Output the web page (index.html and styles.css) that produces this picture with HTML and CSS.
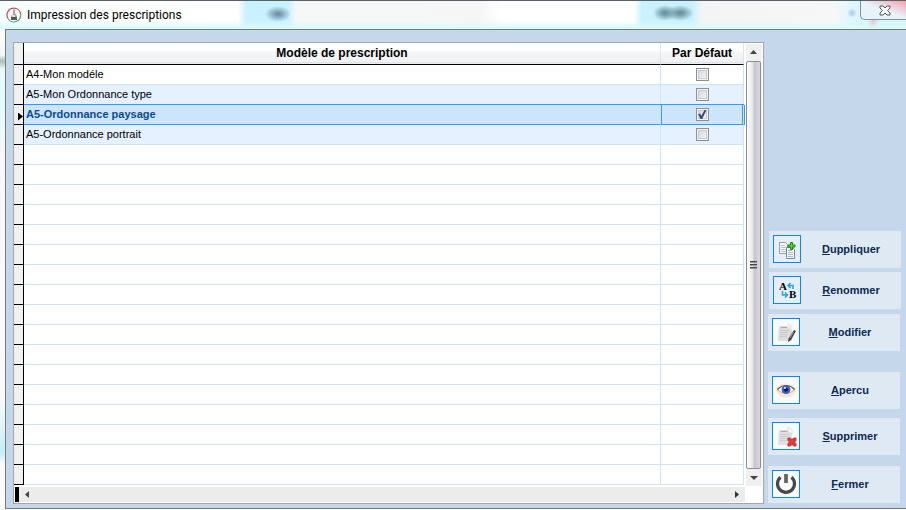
FILE: index.html
```html
<!DOCTYPE html>
<html lang="fr">
<head>
<meta charset="utf-8">
<title>Impression des prescriptions</title>
<link rel="stylesheet" href="styles.css">
</head>
<body>
<header class="titlebar">
  <svg class="app-icon" viewBox="0 0 16 16" aria-hidden="true">
    <circle cx="8" cy="8" r="6.5" fill="#fff"/>
    <path d="M8 1.2A6.8 6.8 0 0 0 2 11.5M8 1.2A6.8 6.8 0 0 1 14.6 7" fill="none" stroke="#d0464b" stroke-width="1.2"/>
    <path d="M14.6 7A6.8 6.8 0 0 1 2 11.5" fill="none" stroke="#43a363" stroke-width="1.2"/>
    <path d="M7 2.5h2V6l2 3v4H5V9l2-2z" fill="#aaa4a4"/>
    <path d="M5 10h6v3H5z" fill="#555"/>
    <path d="M6 8h3v2H6z" fill="#ddd"/>
  </svg>
  <h1 class="title">Impression des prescriptions</h1>
  <button class="close" type="button" aria-label="Fermer la fenêtre">
    <svg width="12" height="11" viewBox="0 0 12 11"><path d="M1 1h3l2 2 2-2h3v2L8.500 5.500 11 8v2H8L6 8l-2 2H1V8l2.500-2.500L1 3z" fill="#fff" stroke="#4c5162"/></svg>
  </button>
</header>
<main class="client">
  <section class="grid-frame">
    <div class="grid-main">
      <table class="grid">
        <colgroup><col class="col-mark"><col><col class="col-default"></colgroup>
        <thead><tr><th class="mark"></th><th>Modèle de prescription</th><th>Par Défaut</th></tr></thead>
        <tbody>
          <tr><td class="mark"></td><td>A4-Mon modéle</td><td class="check"><input type="checkbox" aria-label="A4-Mon modéle par défaut"></td></tr>
          <tr class="band"><td class="mark"></td><td>A5-Mon Ordonnance type</td><td class="check"><input type="checkbox" aria-label="A5-Mon Ordonnance type par défaut"></td></tr>
          <tr class="selected"><td class="mark"><span class="pointer"></span></td><td>A5-Ordonnance paysage</td><td class="check"><input type="checkbox" checked aria-label="A5-Ordonnance paysage par défaut"></td></tr>
          <tr class="band"><td class="mark"></td><td>A5-Ordonnance portrait</td><td class="check"><input type="checkbox" aria-label="A5-Ordonnance portrait par défaut"></td></tr>
          <tr><td class="mark"></td><td></td><td></td></tr>
          <tr><td class="mark"></td><td></td><td></td></tr>
          <tr><td class="mark"></td><td></td><td></td></tr>
          <tr><td class="mark"></td><td></td><td></td></tr>
          <tr><td class="mark"></td><td></td><td></td></tr>
          <tr><td class="mark"></td><td></td><td></td></tr>
          <tr><td class="mark"></td><td></td><td></td></tr>
          <tr><td class="mark"></td><td></td><td></td></tr>
          <tr><td class="mark"></td><td></td><td></td></tr>
          <tr><td class="mark"></td><td></td><td></td></tr>
          <tr><td class="mark"></td><td></td><td></td></tr>
          <tr><td class="mark"></td><td></td><td></td></tr>
          <tr><td class="mark"></td><td></td><td></td></tr>
          <tr><td class="mark"></td><td></td><td></td></tr>
          <tr><td class="mark"></td><td></td><td></td></tr>
          <tr><td class="mark"></td><td></td><td></td></tr>
          <tr><td class="mark"></td><td></td><td></td></tr>
        </tbody>
      </table>
      <div class="hscroll">
        <svg width="16" height="15" viewBox="0 0 16 15"><path d="M10 4v7L6 7.500z" fill="#444"/></svg>
        <svg width="16" height="15" viewBox="0 0 16 15"><path d="M6 4v7l4-3.500z" fill="#333"/></svg>
      </div>
    </div>
    <div class="vscroll">
      <svg width="16" height="17" viewBox="0 0 16 17"><path d="M4 10h7L7.500 6z" fill="#444"/></svg>
      <div class="thumb"><span class="grip"></span><span class="grip"></span><span class="grip"></span></div>
      <svg width="16" height="17" viewBox="0 0 16 17"><path d="M4 7h8l-4 4z" fill="#444"/></svg>
    </div>
  </section>
  <nav class="actions">
    <button class="action shifted" type="button">
      <span class="icon"><svg width="24" height="24" viewBox="0 0 24 24">
        <path d="M4.500 5.500h6l2 2v9h-8z" fill="#f4f8fb" stroke="#8e9fb2"/><path d="M6 8.500h4M6 10.500h5M6 12.500h5M6 14.500h5" stroke="#b4c2d2"/>
        <path d="M11.500 10.500h6l2 2v9h-8z" fill="#f4f8fb" stroke="#76899f"/><path d="M13 13.500h4M13 15.500h5M13 17.500h5M13 19.500h5" stroke="#aab9cc"/>
        <path d="M15.500 5.500h2v2.500h2.500v2h-2.500v2.500h-2V10H13V8h2.500z" fill="#5fd12b" stroke="#18860d"/></svg></span>
      <span class="label"><u>D</u>uppliquer</span>
    </button>
    <button class="action shifted" type="button">
      <span class="icon"><svg width="24" height="24" viewBox="0 0 24 24">
        <text class="glyph" x="4" y="12">A</text><text class="glyph" x="14" y="20">B</text>
        <path d="M13.500 7.500h4.500v3.500M15.500 5L13 7.500l2.500 2.500M7.500 13v4H12M10 14.500l2.500 2.500-2.500 2.500" fill="none" stroke="#25a5dc" stroke-width="1.500"/></svg></span>
      <span class="label"><u>R</u>enommer</span>
    </button>
    <button class="action edit" type="button">
      <span class="icon"><svg width="24" height="24" viewBox="0 0 24 24">
        <path d="M5 6h9l4 3v12H4z" fill="#dedede"/><path d="M14 3l4 3v4l-5-3z" fill="#eee"/><path d="M7 7.500h6" stroke="#aaa"/><path d="M6 10.500h9M6 12.500h8M6 14.500h7M6 16.500h7" stroke="#cacaca"/>
        <path d="M20 10l2 1-5 9-3 2 .5-3.500z" fill="#444"/><path d="M19.500 12L16 18" stroke="#999"/></svg></span>
      <span class="label"><u>M</u>odifier</span>
    </button>
    <button class="action preview" type="button">
      <span class="icon"><svg width="24" height="24" viewBox="0 0 24 24">
        <ellipse cx="12" cy="12.500" rx="9.500" ry="7" fill="#ffe6cd"/>
        <path d="M3.500 12Q12 3 20.500 12 12 19 3.500 12z" fill="#fff" stroke="#dca77c"/>
        <path d="M3 11.500Q12 3.500 21 11.500" fill="none" stroke="#7b6058" stroke-width="1.100"/>
        <circle cx="12" cy="11.700" r="4.400" fill="#2f62d2"/><circle cx="12" cy="11.700" r="2" fill="#071340"/><circle cx="11" cy="10" r="1" fill="#fff"/></svg></span>
      <span class="label"><u>A</u>percu</span>
    </button>
    <button class="action remove" type="button">
      <span class="icon"><svg width="24" height="24" viewBox="0 0 24 24">
        <path d="M5 6h9l4 3v12H4z" fill="#e0e0e0"/><path d="M14 3l4 3v4l-4-3z" fill="#fff" stroke="#ddd"/><path d="M7 7.500h6" stroke="#aaa"/><path d="M6 10.500h9M6 12.500h8M6 14.500h8M6 16.500h7" stroke="#cbcbcb"/>
        <path d="M14 14h2l2 1.500 2-1.500h2v2.500L20.500 18l1.500 1.500V22h-2l-2-1.500L16 22h-2v-2.500l1.500-1.500-1.500-1.500z" fill="#e23c38" stroke="#bf3030"/></svg></span>
      <span class="label"><u>S</u>upprimer</span>
    </button>
    <button class="action quit" type="button">
      <span class="icon"><svg width="24" height="24" viewBox="0 0 24 24">
        <path d="M6.500 5.300a8.500 8.500 0 1 0 11 0" fill="none" stroke="#484848" stroke-width="3.200"/><path d="M12 2v9" stroke="#666" stroke-width="3.800"/></svg></span>
      <span class="label"><u>F</u>ermer</span>
    </button>
  </nav>
</main>
</body>
</html>
```
FILE: styles.css
```css
* { box-sizing: border-box; }
body {
  margin: 0;
  min-height: 100vh;
  display: flex;
  flex-direction: column;
  padding: 0 0 1px 5px;
  font: 11px/15px "Liberation Sans", Arial, sans-serif;
  color: #000;
  background: linear-gradient(#fff 0, #fff 30px, #f4f6f6 55px, #a8bab9 61px, #eefafa 69px, #dffbfb 100px, #f7f7f7 150px, #fafafa 400px, #c8edf5 453px, #fafafa 463px);
}
.titlebar {
  height: 29px;
  margin-left: -5px;
  padding-left: 6px;
  display: flex;
  align-items: center;
  gap: 5px;
  border-top: 1px solid #596066;
  background:
    radial-gradient(ellipse 13px 8px at 278px 13px, #6f8da8 10%, transparent),
    radial-gradient(ellipse 12px 8px at 665px 12px, #6d98a2 20%, transparent),
    radial-gradient(ellipse 14px 8px at 680px 12px, #6d98a2 20%, transparent),
    radial-gradient(ellipse 5px 5px at 852px 12px, #a9c8e8, transparent),
    linear-gradient(transparent 19px, #d9fbfb 27px),
    linear-gradient(90deg, #f5ffff 0, #fff 100px, #fff 238px, #c9f1ff 246px, #c9f1ff 288px, #f6f8f8 296px, #f6f6f6 480px, #fff 500px, #fff 634px, #c9f1ff 642px, #c9f1ff 692px, #f4f4f4 702px, #f7f7f7 835px, #e0f7ff 850px, #d7f2fc 868px, #e9b8c8 873px, #d7f2fc 879px, #d7f2fc);
}
.app-icon { width: 16px; height: 16px; }
.title { margin: 0; flex: 1; font: 12px/16px Roboto, sans-serif; }
.close {
  align-self: flex-start;
  width: 46px;
  height: 19px;
  padding: 0 0 0 3px;
  border: 1px solid #81909b;
  border-top: 0;
  border-right: 0;
  border-radius: 0 0 0 5px;
  background: linear-gradient(20deg, #e7f3f8 50%, #f3a3ae 100%);
}
.close svg { display: block; margin: 0 auto; }
.client {
  flex: 1;
  display: flex;
  align-items: flex-start;
  padding: 12px 5px 4px 7px;
  border: 1px solid #757c80;
  border-right: 0;
  background: #c5d7eb;
}
.grid-frame {
  flex: 1;
  display: flex;
  border: 1px solid #a5a5a5;
  background: #fff;
}
.grid-main { flex: 1; }
.grid {
  width: calc(100% - 1px);
  table-layout: fixed;
  border-collapse: separate;
  border-spacing: 0;
}
.col-mark { width: 10px; }
.col-default { width: 83px; }
.grid th, .grid td {
  height: 20px;
  padding: 0 2px;
  border-right: 1px solid #cce4f9;
  border-bottom: 1px solid #cce4f9;
}
.grid th {
  height: 22px;
  border-right-color: #e0e2e4;
  border-bottom-color: #000;
  background: linear-gradient(#fff 8px, #f5f6f7 9px, #f0f1f3 19px, #d8dadd 20px, #fff 21px);
  font-size: 12px;
}
.grid .mark {
  padding: 0;
  border-right-color: #000;
  border-bottom-color: #000;
  background: #f0f0f0;
}
.band td { background: #e5f1fe; }
.selected td {
  background: #cde5fb;
  border-bottom-color: #3399ff;
  box-shadow: 0 -1px #3399ff;
  color: #0b4a91;
  font-weight: bold;
}
.grid .selected .mark { box-shadow: none; }
.grid .selected .check { box-shadow: 0 -1px #3399ff, inset 1px 0 #3399ff, inset -1px 0 #3399ff, 1px 0 #3399ff; }
.pointer {
  display: block;
  width: 5px;
  height: 8px;
  margin: 4px 0 0 auto;
  background: #000;
  clip-path: polygon(0 0, 100% 50%, 0 100%);
}
.grid .check { text-align: center; }
.check input {
  appearance: none;
  display: block;
  width: 13px;
  height: 13px;
  margin: 0 auto;
  border: 1px solid #8e8f8f;
  background: linear-gradient(135deg, #cfd4da, #f8f8f8);
  box-shadow: inset 0 0 0 1px #f4f4f4, inset 0 0 0 2px #c8cbce;
}
.check input:checked::before {
  content: "";
  display: block;
  width: 9px;
  height: 9px;
  margin: 1px;
  background: #36478f;
  clip-path: polygon(8% 45%, 30% 40%, 42% 66%, 78% 0, 100% 0, 52% 100%, 32% 100%);
}
.hscroll {
  display: flex;
  justify-content: space-between;
  margin: 2px 0 1px 1px;
  border-left: 4px solid #000;
  background: #ececec;
}
.vscroll {
  width: 16px;
  margin: 1px 1px 17px;
  display: flex;
  flex-direction: column;
  background: #f0f0f0;
}
.thumb {
  flex: 1;
  display: flex;
  flex-direction: column;
  align-items: center;
  justify-content: center;
  gap: 1px;
  margin: 0 1px 0 0;
  border: 1px solid #8f8f8f;
  border-radius: 2px;
  background: linear-gradient(90deg, #fafafa 10%, #e6e6e8 45%, #c6c6ca 55%, #d9d9dc);
}
.grip { width: 7px; height: 2px; border-top: 1px solid #444; background: #999; }
.actions {
  display: flex;
  flex-direction: column;
  align-self: flex-end;
  width: 132px;
  margin: 0 1px 1px 4px;
}
.action {
  display: flex;
  align-items: center;
  height: 37px;
  padding: 0 0 0 4px;
  border: 0;
  background: #dfe9f4;
  color: #0d2a52;
  font: bold 11px/15px "Liberation Sans", Arial, sans-serif;
}
.shifted { margin: 0 -1px 4px 1px; }
.edit { margin-top: 1px; }
.preview { margin-top: 21px; }
.remove { margin-top: 9px; }
.quit { margin-top: 11px; }
.icon {
  display: flex;
  align-items: center;
  justify-content: center;
  align-self: flex-start;
  width: 28px;
  height: 28px;
  margin-top: 4px;
  border: 1px solid #0a84ff;
  background: #f8fafc;
}
.shifted .icon { background: #e6eff9; }
.label { flex: 1; text-align: center; }
.glyph { font: bold 11px "Liberation Serif", serif; }
```
